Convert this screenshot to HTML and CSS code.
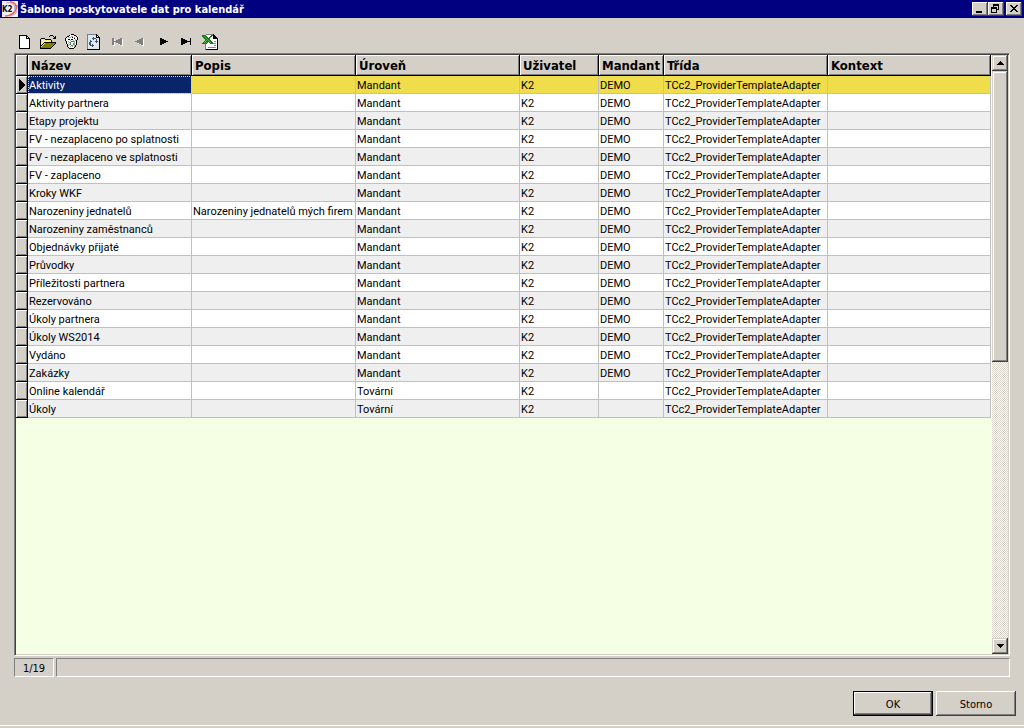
FILE: index.html
```html
<!DOCTYPE html>
<html lang="cs">
<head>
<meta charset="utf-8">
<title>Šablona poskytovatele dat pro kalendář</title>
<link rel="stylesheet" href="styles.css">
</head>
<body>
<header class="titlebar">
  <svg class="app-icon" viewBox="0 0 18 18" aria-hidden="true">
    <path fill="#f4f0f4" d="M1 1h16v16H1z"/>
    <path fill="none" stroke="#e06858" stroke-width="1.5" d="M9 2c7 0 8 7 3 12M4 16c6 0 12-4 12-11"/>
    <path fill="none" stroke="#c0a0b8" d="M5 3c6-2 11 3 8 9M9 16c3 0 6-2 7-5"/>
    <text class="logo-text" x="1" y="12">K2</text>
  </svg>
  <h1 class="title">Šablona poskytovatele dat pro kalendář</h1>
  <div class="window-controls">
    <button class="win-btn" type="button" aria-label="Minimalizovat"><svg viewBox="0 0 12 10"><path d="M2 7h6v2H2z"/></svg></button>
    <button class="win-btn" type="button" aria-label="Obnovit"><svg viewBox="0 0 12 10"><path fill-rule="evenodd" d="M3 0h6v6H7V5h1V2H4v1H3zM1 3h6v6H1zM2 5v3h4V5z"/></svg></button>
    <button class="win-btn win-close" type="button" aria-label="Zavřít"><svg viewBox="0 0 12 10"><path d="M2 1h2v1h1v1h2V2h1V1h2v1H9v1H8v1H7v1h1v1h1v1h1v1H8V7H7V6H5v1H4v1H2V7h1V6h1V5h1V4H4V3H3V2H2z"/></svg></button>
  </div>
</header>
<main class="content">
  <div class="toolbar" role="toolbar" aria-label="Nástroje">
    <button class="tool" type="button" aria-label="Nový"><svg viewBox="0 0 18 16"><path d="M3 1h8v1h1v1h1v1h1v11H3z"/><path fill="#fff" d="M4 2h6v3h3v9H4z"/><path fill="#fff" d="M11 3h1v1h-1z"/></svg></button>
    <button class="tool" type="button" aria-label="Otevřít"><svg viewBox="0 0 18 16"><path fill="#f8f070" d="M2 5h4v1h6v3H6l-4 5z"/><path fill="#fff" d="M3 6h1v1H3zM5 7h1v1H5zM3 9h1v1H3zM8 7h1v1H8zM10 8h1v1h-1z"/><path fill="#808000" d="M6 9h10v1h-1v1h-1v1h-1v1h-1v1H2v-1h1v-1h1v-1h1v-1h1z"/><path d="M2 4h4v1H2zM1 5h1v9H1zM6 5h6v1H6zM12 6h1v2h-1zM5 8h12v1H5zM4 9h1v1H4zM3 10h1v1H3zM2 11h1v1H2zM16 9h1v1h-1zM15 10h1v1h-1zM14 11h1v1h-1zM13 12h1v1h-1zM12 13h1v1h-1zM1 14h11v1H1zM10 2h1v1h-1zM11 1h3v1h-3zM14 2h1v1h-1zM15 3h1v1h-1zM16 2h1v3h-3V4h2z"/></svg></button>
    <button class="tool" type="button" aria-label="Smazat"><svg viewBox="0 0 18 16"><path fill="#fff" d="M4 3h3V1h6v2h2v5h-1v5h-2v1H6v-2H5V7H4z"/><path fill="#a8a8a0" d="M6 3h2v1H6zM9 2h2v1H9zM12 3h1v2h-1zM6 7h1v1H6zM7 8h1v1H7zM6 9h1v1H6zM7 10h1v1H7zM6 11h1v1H6zM8 12h1v1H8zM10 12h1v1h-1zM8 6h1v1H8zM12 7h1v6h-1zM11 6h1v1h-1zM8 3h1v1H8zM13 5h1v2h-1z"/><path d="M7 1h1v1H7zM9 0h3v1H9zM12 1h2v1h-2zM5 2h2v1H5zM14 2h1v1h-1zM4 3h1v1H4zM3 4h1v3H3zM15 3h1v3h-1zM4 7h1v3H4zM5 10h1v3H5zM6 13h1v1H6zM7 14h5v1H7zM12 13h1v1h-1zM13 11h1v2h-1zM14 6h1v5h-1zM6 5h2v1H6zM9 5h2v1H9zM12 4h1v1h-1zM10 3h1v1h-1z"/><path fill="#28a038" d="M9 7h3v1H9zM8 8h1v3H8zM11 9h1v2h-1zM9 11h2v1H9z"/></svg></button>
    <button class="tool" type="button" aria-label="Obnovit data"><svg viewBox="0 0 18 16"><path fill="#708090" d="M2 0h9v1H3v14H2z"/><path fill="#dce8ec" d="M3 1h8v3h3v11H3z"/><path d="M11 0h1v1h1v1h1v1h1v13H2v-1h12V4h-3z"/><path fill="#fff" d="M12 2h1v1h-1z"/><path fill="#44546c" d="M8 3h1v1h2v1h1v2h1v1h-1v1h-1V8h-1V7h1V5H9v1H8V5H7V4h1zM5 6h1v1h1v1H6v3h1v-1h1v1h1v1H8v1H7v-1H5v-1H4V8h1z"/></svg></button>
    <button class="tool" type="button" aria-label="První" disabled><svg viewBox="0 0 18 16"><path fill="#fff" d="M5 5h2v7H5zM13 5h2v7h-2v-1h-2v-1H9V9h4z"/><path fill="#808080" d="M4 4h2v3h2V6h2V5h2V4h2v7h-2v-1h-2V9H8V8H6v3H4z"/></svg></button>
    <button class="tool" type="button" aria-label="Předchozí" disabled><svg viewBox="0 0 18 16"><path fill="#fff" d="M11 5h2v7h-2v-1H9v-1H7V9h4z"/><path fill="#808080" d="M4 7h2V6h2V5h2V4h2v7h-2v-1H8V9H6V8H4z"/></svg></button>
    <button class="tool" type="button" aria-label="Další"><svg viewBox="0 0 18 16"><path d="M6 4h2v1h2v1h2v1h2v1h-2v1h-2v1H8v1H6z"/></svg></button>
    <button class="tool" type="button" aria-label="Poslední"><svg viewBox="0 0 18 16"><path d="M4 4h2v1h2v1h2v1h3V4h1v7h-1V8h-3v1H8v1H6v1H4z"/></svg></button>
    <button class="tool" type="button" aria-label="Export do Excelu"><svg viewBox="0 0 18 16"><path fill="#fff" d="M6 1h8v3h3v11H6z"/><path fill="#808080" d="M6 0h8v1H6zM5 10h1v6H5z"/><path d="M13 0h1v1h1v1h1v1h1v1h1v12H6v-1h11V5h-4z"/><path fill="#888" d="M14 7h2v1h-2zM13 9h3v1h-3zM14 11h2v1h-2zM8 13h8v1H8z"/><path fill="#167a1c" d="M2 1h4v1h1v1h1v1h1V3h1V2h1V1h2v1h-1v1h-1v1h-1v2h1v1h1v1h1v2h-3V9H9V8H8v1H7v1H2V9h1V8h1V7h1V5H4V4H3V3H2z"/><path fill="#4fb04c" d="M4 2h1v1H4zM5 3h1v1H5zM6 4h1v1H6zM7 5h1v1H7zM8 6h1v1H8zM9 7h1v1H9zM10 8h1v1h-1zM10 3h1v1h-1zM6 6h1v1H6zM5 7h1v1H5zM4 8h1v1H4zM6 8h1v1H6z"/></svg></button>
  </div>

  <div class="grid">
    <div class="grid-view">
      <table class="data">
        <colgroup><col class="c-mark"><col class="c-wide"><col class="c-wide"><col class="c-wide"><col class="c-user"><col class="c-firm"><col class="c-wide"><col></colgroup>
        <thead><tr><th></th><th scope="col">Název</th><th scope="col">Popis</th><th scope="col">Úroveň</th><th scope="col">Uživatel</th><th scope="col">Mandant</th><th scope="col">Třída</th><th scope="col">Kontext</th></tr></thead>
        <tbody>
          <tr class="current"><td><svg class="marker" viewBox="0 0 6 12" aria-label="Aktuální řádek"><path d="M0 0l6 6-6 6z"/></svg></td><td class="focused">Aktivity</td><td></td><td>Mandant</td><td>K2</td><td>DEMO</td><td>TCc2_ProviderTemplateAdapter</td><td></td></tr>
          <tr><td></td><td>Aktivity partnera</td><td></td><td>Mandant</td><td>K2</td><td>DEMO</td><td>TCc2_ProviderTemplateAdapter</td><td></td></tr>
          <tr><td></td><td>Etapy projektu</td><td></td><td>Mandant</td><td>K2</td><td>DEMO</td><td>TCc2_ProviderTemplateAdapter</td><td></td></tr>
          <tr><td></td><td>FV - nezaplaceno po splatnosti</td><td></td><td>Mandant</td><td>K2</td><td>DEMO</td><td>TCc2_ProviderTemplateAdapter</td><td></td></tr>
          <tr><td></td><td>FV - nezaplaceno ve splatnosti</td><td></td><td>Mandant</td><td>K2</td><td>DEMO</td><td>TCc2_ProviderTemplateAdapter</td><td></td></tr>
          <tr><td></td><td>FV - zaplaceno</td><td></td><td>Mandant</td><td>K2</td><td>DEMO</td><td>TCc2_ProviderTemplateAdapter</td><td></td></tr>
          <tr><td></td><td>Kroky WKF</td><td></td><td>Mandant</td><td>K2</td><td>DEMO</td><td>TCc2_ProviderTemplateAdapter</td><td></td></tr>
          <tr><td></td><td>Narozeniny jednatelů</td><td>Narozeniny jednatelů mých firem</td><td>Mandant</td><td>K2</td><td>DEMO</td><td>TCc2_ProviderTemplateAdapter</td><td></td></tr>
          <tr><td></td><td>Narozeniny zaměstnanců</td><td></td><td>Mandant</td><td>K2</td><td>DEMO</td><td>TCc2_ProviderTemplateAdapter</td><td></td></tr>
          <tr><td></td><td>Objednávky přijaté</td><td></td><td>Mandant</td><td>K2</td><td>DEMO</td><td>TCc2_ProviderTemplateAdapter</td><td></td></tr>
          <tr><td></td><td>Průvodky</td><td></td><td>Mandant</td><td>K2</td><td>DEMO</td><td>TCc2_ProviderTemplateAdapter</td><td></td></tr>
          <tr><td></td><td>Příležitosti partnera</td><td></td><td>Mandant</td><td>K2</td><td>DEMO</td><td>TCc2_ProviderTemplateAdapter</td><td></td></tr>
          <tr><td></td><td>Rezervováno</td><td></td><td>Mandant</td><td>K2</td><td>DEMO</td><td>TCc2_ProviderTemplateAdapter</td><td></td></tr>
          <tr><td></td><td>Úkoly partnera</td><td></td><td>Mandant</td><td>K2</td><td>DEMO</td><td>TCc2_ProviderTemplateAdapter</td><td></td></tr>
          <tr><td></td><td>Úkoly WS2014</td><td></td><td>Mandant</td><td>K2</td><td>DEMO</td><td>TCc2_ProviderTemplateAdapter</td><td></td></tr>
          <tr><td></td><td>Vydáno</td><td></td><td>Mandant</td><td>K2</td><td>DEMO</td><td>TCc2_ProviderTemplateAdapter</td><td></td></tr>
          <tr><td></td><td>Zakázky</td><td></td><td>Mandant</td><td>K2</td><td>DEMO</td><td>TCc2_ProviderTemplateAdapter</td><td></td></tr>
          <tr><td></td><td>Online kalendář</td><td></td><td>Tovární</td><td>K2</td><td></td><td>TCc2_ProviderTemplateAdapter</td><td></td></tr>
          <tr><td></td><td>Úkoly</td><td></td><td>Tovární</td><td>K2</td><td></td><td>TCc2_ProviderTemplateAdapter</td><td></td></tr>
        </tbody>
      </table>
    </div>
    <div class="scrollbar">
      <button class="raised scroll-btn" type="button" aria-label="Nahoru"><svg viewBox="0 0 7 4"><path d="M3 0h1v1h1v1h1v1h1v1H0V3h1V2h1V1h1z"/></svg></button>
      <div class="track"><div class="raised thumb"></div></div>
      <button class="raised scroll-btn" type="button" aria-label="Dolů"><svg viewBox="0 0 7 4"><path d="M0 0h7v1H6v1H5v1H4v1H3V3H2V2H1V1H0z"/></svg></button>
    </div>
  </div>

  <div class="status">
    <div class="panel position">1/19</div>
    <div class="panel message"></div>
  </div>
</main>
<footer class="actions">
  <button class="push default" type="button">OK</button>
  <button class="push" type="button">Storno</button>
</footer>
</body>
</html>
```
FILE: styles.css
```css
* { box-sizing: border-box; }

body {
  margin: 0;
  min-height: 100vh;
  display: flex;
  flex-direction: column;
  background: #d4d0c8;
  color: #000;
  font: 11px/13px "DejaVu Sans Condensed", Tahoma, "DejaVu Sans", sans-serif;
}

button {
  margin: 0;
  padding: 0;
  border: 0;
  background: #d4d0c8;
  color: inherit;
  font: inherit;
}

svg { display: block; shape-rendering: crispEdges; }

.titlebar {
  display: flex;
  align-items: center;
  height: 18px;
  padding: 0 2px 0 1px;
  background: #000080;
  color: #fff;
}
.app-icon { width: 18px; height: 18px; shape-rendering: auto; }
.logo-text { font-size: 8px; font-weight: bold; fill: #101018; }
.title {
  flex: 1;
  margin: 0 0 0 1px;
  font-size: 11px;
  font-weight: bold;
  white-space: nowrap;
}
.window-controls { display: flex; }
.win-btn {
  width: 16px;
  height: 14px;
  padding: 1px 1px 1px 2px;
  box-shadow: inset -1px -1px #404040, inset 1px 1px #fff, inset -2px -2px #808080;
}
.win-btn svg { width: 12px; height: 10px; }
.win-close { margin-left: 2px; }

.content {
  flex: 1;
  display: flex;
  flex-direction: column;
  padding: 13px 14px 0;
}

.toolbar { display: flex; height: 22px; margin-left: -1px; }
.tool { width: 23px; height: 22px; padding: 3px 2px 3px 3px; }
.tool svg { width: 18px; height: 16px; }

.grid {
  flex: 1;
  display: flex;
  border: 1px solid;
  border-color: #808080 #fff #fff #808080;
  padding: 1px;
  box-shadow: inset 1px 1px #404040, inset -1px -1px #d4d0c8;
}
.grid-view { flex: 1; padding-right: 1px; background: #f4ffe4; }

.data {
  width: 100%;
  table-layout: fixed;
  border-collapse: separate;
  border-spacing: 0;
}
.c-mark { width: 12px; }
.c-wide { width: 164px; }
.c-user { width: 79px; }
.c-firm { width: 65px; }

.data th {
  height: 21px;
  padding: 2px 0 0 3px;
  background: #d4d0c8;
  border-right: 1px solid #000;
  border-bottom: 1px solid #000;
  box-shadow: inset 1px 1px #fff, inset -1px -1px #808080;
  font-size: 13px;
  line-height: 18px;
  text-align: left;
  white-space: nowrap;
}
.data td {
  height: 18px;
  padding: 2px 0 0 1px;
  background: #fff;
  border-right: 1px solid #c0c0c0;
  border-bottom: 1px solid #c0c0c0;
  font-family: Roboto, Tahoma, sans-serif;
  line-height: 15px;
  white-space: nowrap;
}
.data tr:nth-child(odd) td { background: #efefef; }
.data tr.current td { background: #efdd4b; }
.data tr td:first-child,
.data tr.current td:first-child {
  padding: 0 0 0 3px;
  background: #d4d0c8;
  border-color: #000;
  box-shadow: inset 1px 1px #fff, inset -1px -1px #808080;
}
.data tr.current .focused {
  background: #0a246a;
  color: #fff;
  outline: 1px dotted #f0dca0;
  outline-offset: -1px;
}
.marker { width: 6px; height: 12px; }

.scrollbar { display: flex; flex-direction: column; width: 16px; }
.raised {
  background: #d4d0c8;
  box-shadow: inset -1px -1px #404040, inset 1px 1px #d4d0c8, inset -2px -2px #808080, inset 2px 2px #fff;
}
.scroll-btn { display: grid; place-items: center; width: 16px; height: 16px; }
.scroll-btn svg { width: 7px; height: 4px; }
.track {
  flex: 1;
  background: repeating-conic-gradient(#d4d0c8 0 25%, #fff 0 50%) 0 0 / 2px 2px;
}
.thumb { height: 291px; }

.status { display: flex; gap: 2px; margin-top: 2px; }
.panel {
  height: 19px;
  border: 1px solid;
  border-color: #808080 #fff #fff #808080;
  line-height: 20px;
}
.position { width: 40px; text-align: center; }
.message { flex: 1; }

.actions {
  display: flex;
  justify-content: flex-end;
  gap: 3px;
  margin-bottom: 2px;
  padding: 14px 8px 9px;
  border-bottom: 1px solid #fff;
}
.push {
  width: 80px;
  height: 25px;
  padding-top: 2px;
  box-shadow: inset -1px -1px #404040, inset 1px 1px #fff, inset -2px -2px #808080;
}
.default {
  border: 1px solid #000;
}
```
